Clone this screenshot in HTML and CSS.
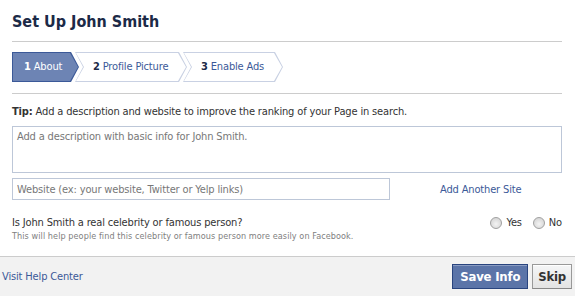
FILE: index.html
```html
<!DOCTYPE html>
<html lang="en">
<head>
    <meta charset="UTF-8">
    <title>Set Up John Smith</title>
    <link rel="stylesheet" href="styles.css">
</head>
<body>

    <div class="content">
        <h1 class="page-title">Set Up John Smith</h1>

        <div class="steps">
            <div class="step step-first active"><b>1</b> About</div>
            <div class="step step-second"><b>2</b> Profile Picture</div>
            <div class="step step-third"><b>3</b> Enable Ads</div>
        </div>

        <p class="tip"><b>Tip:</b> Add a description and website to improve the ranking of your Page in search.</p>

        <textarea class="about-input" placeholder="Add a description with basic info for John Smith."></textarea>

        <div class="site-row">
            <input type="text" class="site-input" placeholder="Website (ex: your website, Twitter or Yelp links)">
            <a href="#" class="link add-site">Add Another Site</a>
        </div>

        <div class="celebrity-row">
            <div class="question">
                <div class="question-text">Is John Smith a real celebrity or famous person?</div>
                <div class="question-note">This will help people find this celebrity or famous person more easily on Facebook.</div>
            </div>
            <div class="choices">
                <label class="choice"><input type="radio" name="celebrity"> Yes</label>
                <label class="choice"><input type="radio" name="celebrity"> No</label>
            </div>
        </div>
    </div>

    <footer class="footer">
        <a href="#" class="link">Visit Help Center</a>
        <div class="buttons">
            <button class="btn btn-primary">Save Info</button>
            <button class="btn">Skip</button>
        </div>
    </footer>

</body>
</html>
```

FILE: styles.css
```css
body {
    margin: 0;
    background: #fff;
    font-family: Tahoma, "DejaVu Sans Condensed", "Liberation Sans", sans-serif;
    font-size: 11px;
    letter-spacing: -0.15px;
    color: #333;
}

.content {
    width: 550px;
    margin-left: 12px;
}

.page-title {
    margin: 0;
    padding: 12px 0 10px;
    font-size: 16px;
    line-height: 19px;
    letter-spacing: 0;
    color: #1c2a47;
    border-bottom: 1px solid #ccc;
}

/* wizard steps */
.steps {
    display: flex;
    margin-top: 10px;
    padding-bottom: 11px;
    border-bottom: 1px solid #ccc;
}

.step {
    position: relative;
    isolation: isolate;
    height: 30px;
    line-height: 30px;
    padding-left: 18px;
    color: #3b5998;
    background: #c9d1e3;
    clip-path: polygon(0 0, calc(100% - 8px) 0, 100% 50%, calc(100% - 8px) 100%, 0 100%, 8px 50%);
    margin-left: -4px;
    box-sizing: border-box;
}

.step::before {
    content: "";
    position: absolute;
    inset: 1px;
    background: #fff;
    clip-path: polygon(0 0, calc(100% - 8px) 0, 100% 50%, calc(100% - 8px) 100%, 0 100%, 8px 50%);
    z-index: -1;
}

.step b {
    color: #1c2a47;
}

.step-first {
    width: 67px;
    margin-left: 0;
    padding-left: 12px;
    color: #fff;
    background: #3b5998;
    clip-path: polygon(0 0, calc(100% - 8px) 0, 100% 50%, calc(100% - 8px) 100%, 0 100%);
}

.step-first::before {
    background: #6d84b4;
    clip-path: polygon(0 0, calc(100% - 8px) 0, 100% 50%, calc(100% - 8px) 100%, 0 100%);
}

.step-first b {
    color: #fff;
}

.step-second {
    width: 112px;
}

.step-third {
    width: 100px;
}

.tip {
    margin: 11px 0 0;
    line-height: 14px;
}

.about-input,
.site-input {
    display: block;
    box-sizing: border-box;
    border: 1px solid #bdc7d8;
    font-family: inherit;
    font-size: 11px;
    letter-spacing: -0.15px;
    color: #333;
    padding: 3px 4px;
    margin: 0;
}

.about-input::placeholder,
.site-input::placeholder {
    color: #777;
}

.about-input {
    width: 550px;
    height: 47px;
    margin-top: 7px;
    resize: none;
}

.site-row {
    display: flex;
    align-items: center;
    margin-top: 5px;
}

.site-input {
    width: 378px;
    height: 22px;
}

.link {
    color: #3b5998;
    text-decoration: none;
}

.add-site {
    margin-left: 50px;
}

.celebrity-row {
    display: flex;
    justify-content: space-between;
    margin-top: 16px;
}

.question-text {
    line-height: 14px;
}

.question-note {
    font-size: 9px;
    letter-spacing: 0.08px;
    line-height: 12px;
    color: #808080;
}

.choices {
    display: flex;
    gap: 11px;
    line-height: 14px;
    height: 14px;
}

.choice {
    display: flex;
    align-items: center;
    gap: 4px;
}

.choice input {
    appearance: none;
    margin: 0;
    width: 12px;
    height: 12px;
    border-radius: 50%;
    border: 1px solid #a0a0a0;
    background: radial-gradient(circle at 50% 60%, #f4f4f4 0, #e2e2e2 45%, #cfcfcf 100%);
    box-sizing: border-box;
}

/* footer bar */
.footer {
    display: flex;
    justify-content: space-between;
    align-items: center;
    margin-top: 14px;
    height: 39px;
    padding: 0 3px 0 2px;
    background: #f2f2f2;
    border-top: 1px solid #ccc;
}

.buttons {
    display: flex;
    gap: 4px;
}

.btn {
    height: 25px;
    padding: 0 5px;
    font-family: inherit;
    font-size: 13px;
    font-weight: bold;
    letter-spacing: -0.2px;
    color: #333;
    background: linear-gradient(#f5f6f7, #e3e3e3);
    border: 1px solid #999;
    border-bottom-color: #888;
    box-shadow: inset 0 1px 0 #fff;
}

.btn-primary {
    color: #fff;
    background: #5b74a8;
    border-color: #29447e;
    box-shadow: inset 0 1px 0 #8a9cc2;
    padding: 0 7px;
}
```
